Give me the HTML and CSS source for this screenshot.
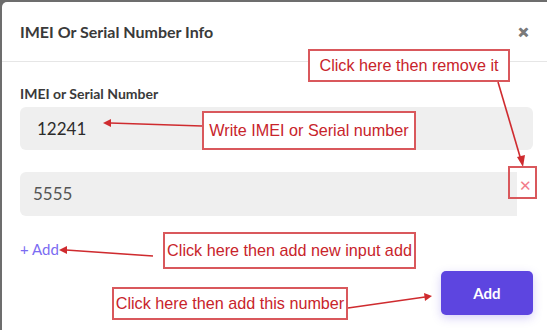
FILE: index.html
```html
<!DOCTYPE html>
<html lang="en">
<head>
  <meta charset="UTF-8">
  <meta name="viewport" content="width=device-width, initial-scale=1.0">
  <title>IMEI Or Serial Number Info</title>
  <link rel="stylesheet" href="styles.css">
</head>
<body>
  <div class="modal">
    <div class="modal-header">
      <h2 class="modal-title">IMEI Or Serial Number Info</h2>
      <span class="close">&#x2715;</span>
    </div>
    <div class="modal-body">
      <label class="field-label">IMEI or Serial Number</label>
      <div class="field-row">
        <div class="field first">12241</div>
      </div>
      <div class="field-row">
        <div class="field second">5555</div>
        <span class="remove">&#x2715;</span>
      </div>
      <a class="add-link">+ Add</a>
    </div>
    <div class="modal-footer">
      <button class="btn-add">Add</button>
    </div>
  </div>

  <!-- annotation layer -->
  <svg class="arrows" width="547" height="330" viewBox="0 0 547 330">
    <g stroke="#cf2b2f" stroke-width="1.6" fill="#cf2b2f">
      <line x1="498" y1="82" x2="521" y2="160" />
      <polygon points="523,167 517,157 525,155" stroke="none" />
      <line x1="202" y1="126" x2="110" y2="123" />
      <polygon points="103,123 111,119 111,127" stroke="none" />
      <line x1="153" y1="256" x2="66" y2="250" />
      <polygon points="59,250 67,246 67,254" stroke="none" />
      <line x1="348" y1="308" x2="425" y2="297" />
      <polygon points="432,296 424,293 425,301" stroke="none" />
    </g>
  </svg>
  <div class="note note-remove">Click here then remove it</div>
  <div class="note note-write">Write IMEI or Serial number</div>
  <div class="note note-x"></div>
  <div class="note note-new">Click here then add new input add</div>
  <div class="note note-number">Click here then add this number</div>
</body>
</html>
```

FILE: styles.css
```css
body {
  margin: 0;
  background-color: #6d6d6d;
  font-family: Lato, "Noto Sans", sans-serif;
  color: #333;
  width: 547px;
  height: 330px;
  overflow: hidden;
  position: relative;
}
.modal {
  margin: 2px 0 0 2px;
  width: 560px;
  height: 340px;
  background: #fff;
  border-radius: 5px 0 0 0;
}
.modal-header {
  box-sizing: border-box;
  height: 60px;
  width: 545px;
  display: flex;
  align-items: center;
  padding: 0 18px 0 18px;
  border-bottom: 1px solid #e6e6e6;
}
.modal-title {
  margin: 0;
  font-size: 16px;
  font-weight: 700;
  color: #3a3a3a;
  flex: 1;
  padding-bottom: 1px;
}
.close {
  font-size: 13px;
  font-weight: 900;
  color: #7a7a7a;
  -webkit-text-stroke: 1px #7a7a7a;
}
.modal-body {
  padding: 23px 0 0 18px;
  width: 513px;
}
.field-label {
  display: block;
  font-size: 14px;
  font-weight: 700;
  color: #3a3a3a;
  margin-bottom: 5px;
}
.field-row {
  display: flex;
  align-items: center;
  margin-bottom: 22px;
}
.field {
  background: #efefef;
  height: 43px;
  line-height: 43px;
  border-radius: 6px;
  flex: 1;
  font-size: 17px;
}
.field.first {
  padding-left: 17px;
  color: #2b2b2b;
}
.field.second {
  padding-left: 13px;
  height: 44px;
  line-height: 44px;
  border-radius: 6px 0 0 6px;
  color: #555;
}
.remove {
  width: 16px;
  text-align: center;
  color: #f27d8c;
  font-size: 15px;
  margin-top: -18px;
}
.add-link {
  display: inline-block;
  margin-top: 2px;
  font-size: 15px;
  color: #7b6cf2;
}
.modal-footer {
  display: flex;
  justify-content: flex-end;
  width: 531px;
  margin-top: 13px;
}
.btn-add {
  width: 92px;
  height: 44px;
  border: none;
  border-radius: 5px;
  background: #5d45e0;
  color: #fff;
  font-family: Lato, sans-serif;
  font-weight: 700;
  font-size: 15px;
  box-shadow: 0 3px 10px rgba(93, 69, 224, 0.25);
}

/* annotations */
.arrows {
  position: absolute;
  left: 0;
  top: 0;
  pointer-events: none;
}
.note {
  position: absolute;
  box-sizing: border-box;
  border: 2px solid #d9585c;
  background: #fff;
  color: #c8242b;
  font-family: "Liberation Sans", Arial, sans-serif;
  font-size: 16.2px;
  display: flex;
  align-items: center;
  justify-content: center;
  white-space: nowrap;
}
.note-remove { left: 308px; top: 49px; width: 202px; height: 33px; }
.note-write { left: 202px; top: 111px; width: 214px; height: 39px; }
.note-x { left: 508px; top: 166px; width: 29px; height: 33px; background: transparent; }
.note-new { left: 163px; top: 232px; width: 253px; height: 37px; }
.note-number { left: 112px; top: 287px; width: 236px; height: 33px; }
```
